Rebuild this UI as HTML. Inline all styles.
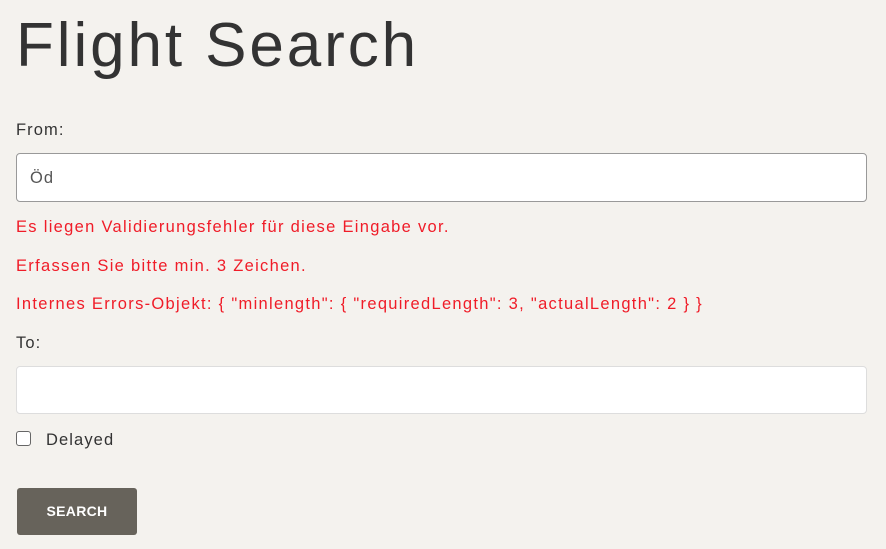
<!DOCTYPE html>
<html><head><style>
body{margin:0;width:886px;height:549px;background:#f4f2ee;font-family:"Liberation Sans",sans-serif;color:#333;position:relative;overflow:hidden}
.a{position:absolute;white-space:nowrap}
h1{position:absolute;left:16px;top:10px;margin:0;font-weight:normal;font-size:62px;line-height:72px;color:#333;letter-spacing:2.9px}
.t{font-size:16.5px;line-height:20px;letter-spacing:1.1px}
.e{color:#f01c28;font-size:16.5px;line-height:20px;letter-spacing:1.3px}
.inp{position:absolute;left:16px;width:851px;background:#fff;border-radius:4px;box-sizing:border-box}
.btn{position:absolute;left:17px;top:488px;width:120px;height:47px;background:#67635b;border-radius:3px;color:#fff;font-weight:bold;font-size:14px;text-align:center;line-height:47px;letter-spacing:0.3px}
.cb{position:absolute;left:16px;top:431px;width:15px;height:15px;border:1px solid #666;border-radius:3px;background:#fff;box-sizing:border-box}
</style></head><body>
<h1>Flight Search</h1>
<div class="a t" style="left:16px;top:120px">From:</div>
<div class="inp" style="top:153px;height:49px;border:1px solid #999"><span class="a t" style="left:13px;top:14px;color:#555">Öd</span></div>
<div class="a e" style="left:16px;top:217px">Es liegen Validierungsfehler für diese Eingabe vor.</div>
<div class="a e" style="left:16px;top:256px">Erfassen Sie bitte min. 3 Zeichen.</div>
<div class="a e" style="left:16px;top:294px">Internes Errors-Objekt: { "minlength": { "requiredLength": 3, "actualLength": 2 } }</div>
<div class="a t" style="left:16px;top:333px">To:</div>
<div class="inp" style="top:366px;height:48px;border:1px solid #ddd"></div>
<div class="cb"></div>
<div class="a t" style="left:46px;top:430px">Delayed</div>
<div class="btn">SEARCH</div>
</body></html>
